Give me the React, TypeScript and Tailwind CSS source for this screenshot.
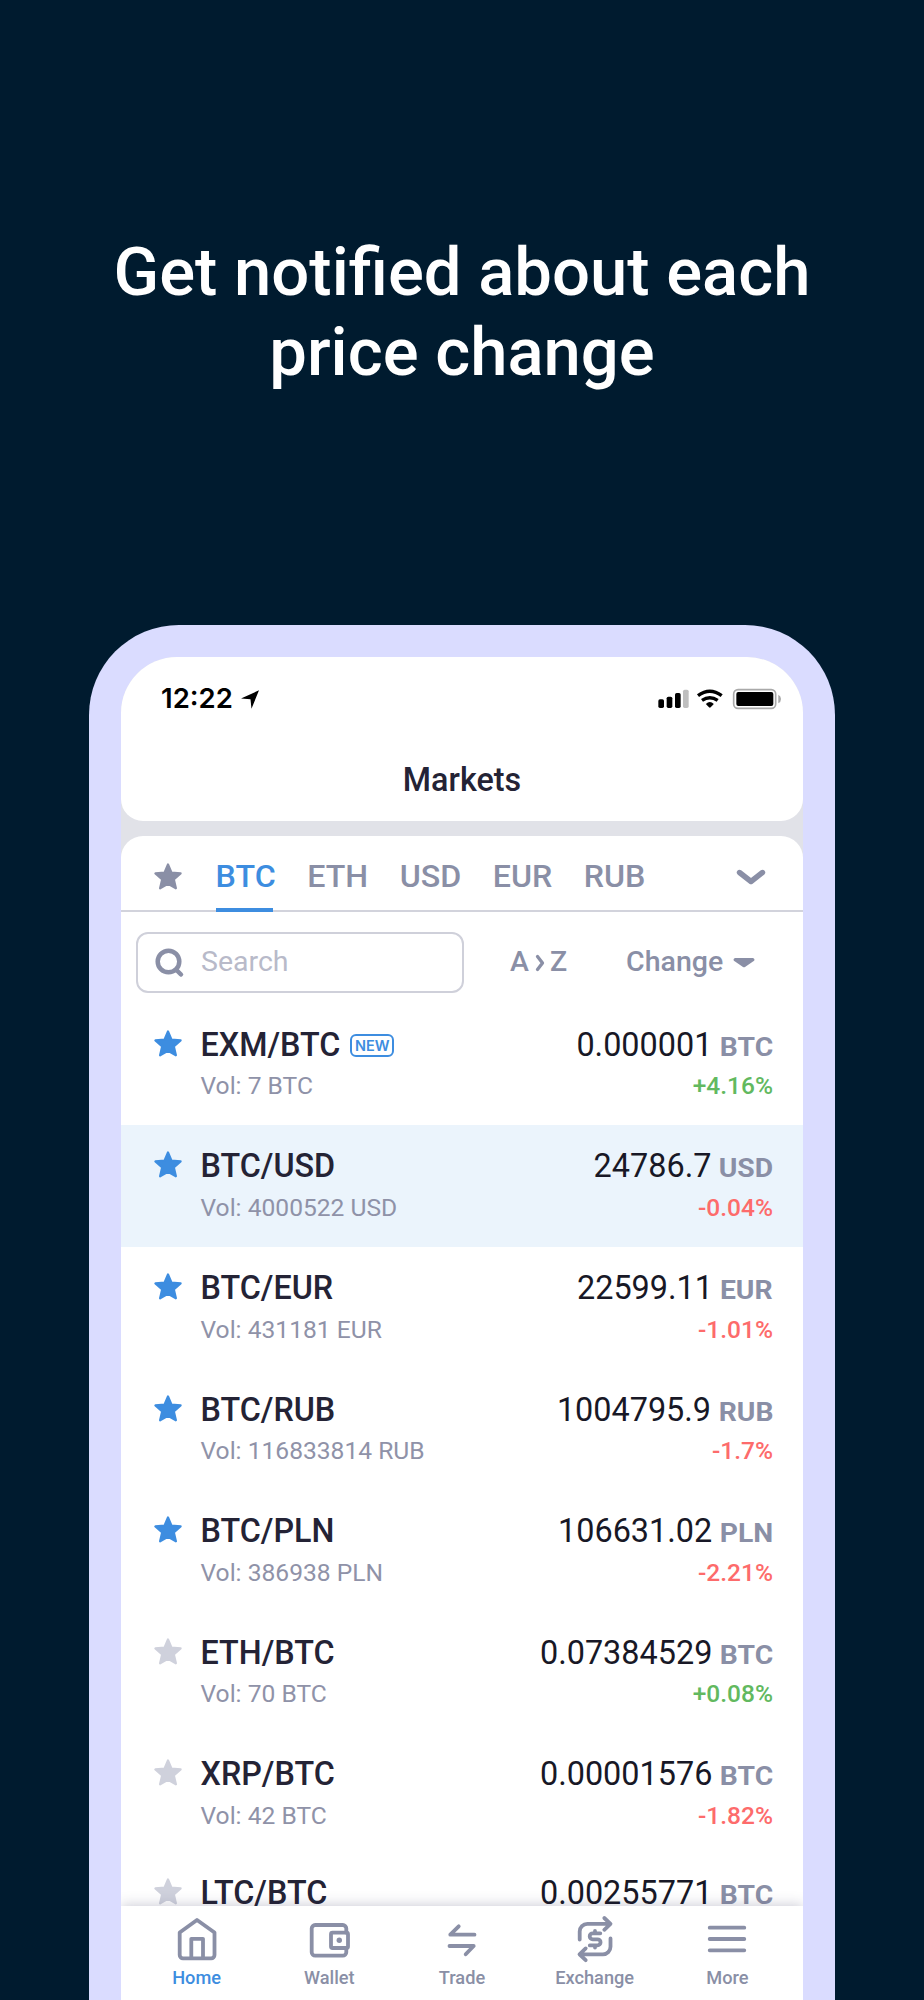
import clsx from 'clsx'

interface Market {
  name: string
  volume: string
  price: string
  unit: string
  change: string
  favorite?: boolean
  isNew?: boolean
  active?: boolean
}

const markets: Market[] = [
  { name: 'EXM/BTC', volume: '7 BTC', price: '0.000001', unit: 'BTC', change: '+4.16%', favorite: true, isNew: true },
  { name: 'BTC/USD', volume: '4000522 USD', price: '24786.7', unit: 'USD', change: '-0.04%', favorite: true, active: true },
  { name: 'BTC/EUR', volume: '431181 EUR', price: '22599.11', unit: 'EUR', change: '-1.01%', favorite: true },
  { name: 'BTC/RUB', volume: '116833814 RUB', price: '1004795.9', unit: 'RUB', change: '-1.7%', favorite: true },
  { name: 'BTC/PLN', volume: '386938 PLN', price: '106631.02', unit: 'PLN', change: '-2.21%', favorite: true },
  { name: 'ETH/BTC', volume: '70 BTC', price: '0.07384529', unit: 'BTC', change: '+0.08%' },
  { name: 'XRP/BTC', volume: '42 BTC', price: '0.00001576', unit: 'BTC', change: '-1.82%' },
]

function Star({ className }: { className?: string }) {
  return (
    <svg viewBox="0 0 30 30" className={clsx('h-[30px] w-[30px] shrink-0', className)}>
      <path
        d="M15 2.4 18.4 10.5 27.6 11.4 20.8 17.3 22.9 26.3 15 21.8 7.1 26.3 9.2 17.3 2.4 11.4 11.6 10.5Z"
        fill="currentColor" stroke="currentColor" strokeWidth="2.2" strokeLinejoin="round"
      />
    </svg>
  )
}

function StatusIcons() {
  return (
    <div className="flex items-center">
      <svg viewBox="0 0 99 66" className="h-[22px] w-[33px]">
        <g fill="#000">
          <rect x="4" y="34" width="17" height="26" rx="5" />
          <rect x="29" y="26" width="17" height="34" rx="5" />
          <rect x="54" y="15" width="17" height="45" rx="5" />
        </g>
        <rect x="78" y="5" width="17" height="55" rx="5" fill="#bfbfbf" />
      </svg>
      <svg viewBox="0 0 99 66" className="ml-[3px] h-[22px] w-[33px]">
        <g fill="none" stroke="#000" strokeWidth="10.5">
          <path d="M15 23Q50.5 -3 86 23" />
          <path d="M27 37Q50.5 21 74 37" />
        </g>
        <path d="M38.5 48Q50.5 36 62.5 48L53 58Q50.5 60 48 58Z" />
      </svg>
      <svg viewBox="0 0 153 66" className="ml-[5px] h-[22px] w-[51px]">
        <rect x="8" y="5" width="126" height="56" rx="13" fill="none" stroke="#a9a9a9" strokeWidth="5" />
        <rect x="16" y="12" width="111" height="42" rx="6" />
        <path d="M142 20Q150 24 150 33T142 46Z" fill="#a9a9a9" />
      </svg>
    </div>
  )
}

function NavIcon({ name }: { name: string }) {
  return (
    <svg viewBox="0 0 48 48" className="h-12 w-12 text-[#8a8fa6]" fill="none" stroke="currentColor" strokeWidth="3.8" strokeLinecap="round" strokeLinejoin="round">
      {name === 'Home' && (
        <>
          <path d="M24 5 41.5 17.5V40a3.3 3.3 0 0 1-3.3 3.3H10a3.3 3.3 0 0 1-3.3-3.3V17.5Z" />
          <path d="M18.3 43V23.8H30V43" />
        </>
      )}
      {name === 'Wallet' && (
        <>
          <path d="M41.3 17.7V13.5a3.5 3.5 0 0 0-3.5-3.5H10.2a3.5 3.5 0 0 0-3.5 3.5V37.2a3.5 3.5 0 0 0 3.5 3.5H37.8a3.5 3.5 0 0 0 3.5-3.5V33" />
          <rect x="26" y="17.7" width="17" height="15.3" rx="1.5" />
          <circle cx="34.3" cy="25.3" r="2.7" fill="currentColor" stroke="none" />
        </>
      )}
      {name === 'Trade' && (
        <>
          <path d="M36.5 19.7H12.3L20.7 11.3" />
          <path d="M11.5 31H35.7L27.7 39.3" />
        </>
      )}
      {name === 'Exchange' && (
        <>
          <path d="M8.7 24.5V16.5A7.6 7.6 0 0 1 16.3 8.9H39M33.3 3 39.5 8.9 33.3 14.8" />
          <path d="M39.5 23.5V31.7A7.6 7.6 0 0 1 31.9 39.3H9M14.7 33.4 8.5 39.3 14.7 45.2" />
          <path d="M29.3 18.3H21.7a3 3 0 0 0 0 6H26.5a3 3 0 0 1 0 6.1H18.8M24 16V18M24 30.5V32.5" />
        </>
      )}
      {name === 'More' && <path d="M6.7 12.7H41.3M6.7 24H41.3M6.7 35.3H41.3" />}
    </svg>
  )
}

function MarketRow({ market }: { market: Market }) {
  return (
    <div className={clsx('flex h-[121.6px] justify-between pt-[21.5px] pr-[30px] pl-8', market.active && 'bg-[#ebf4fc]')}>
      <div className="flex">
        <Star className={clsx('mt-1', market.favorite ? 'text-[#3d8de0]' : 'text-[#cfd1dc]')} />
        <div className="ml-[17.5px]">
          <div className="flex h-10 items-center">
            <span className="text-[32.3px] leading-10 font-medium text-[#242335]">{market.name}</span>
            {market.isNew && (
              <span className="mt-px ml-2.5 flex h-[23px] w-11 items-center justify-center rounded-md border-2 border-[#3d8de0] font-['Inter',sans-serif] text-[14.5px] font-semibold text-[#3d8de0]">
                NEW
              </span>
            )}
          </div>
          <div className="mt-[5.6px] text-[24.6px] leading-8 text-[#8f92a8]">Vol: {market.volume}</div>
        </div>
      </div>
      <div className="flex flex-col items-end">
        <div className="flex h-10 items-baseline leading-10 text-[#181826]">
          <span className="text-[32.4px]">{market.price}</span>
          <span className="ml-[13.5px] origin-right scale-x-[1.13] text-[25px] font-bold text-[#8a8fa6]">{market.unit}</span>
        </div>
        <div className={clsx('mt-[5.6px] text-[24.5px] leading-8 font-medium', market.change.startsWith('+') ? 'text-[#62b95f]' : 'text-[#fd6b6b]')}>
          {market.change}
        </div>
      </div>
    </div>
  )
}

export default function App() {
  return (
    <div className="flex h-[2000px] w-[924px] flex-col items-center overflow-hidden bg-[#001b2f] pt-[232px] font-['Roboto',sans-serif]">
      <h1 className="h-40 text-center text-[67px] leading-[80px] font-medium whitespace-nowrap text-white">
        Get notified about each
        <br />
        price change
      </h1>

      <div className="mt-[233px] h-[1375px] w-[746px] shrink-0 rounded-t-[90px] bg-[#dadcff] px-8 pt-8">
        <div className="flex h-[1343px] flex-col overflow-hidden rounded-t-[56px] bg-[#e1e2e8]">
          <header className="h-[164px] shrink-0 rounded-b-[22px] bg-white">
            <div className="flex h-[84px] items-center justify-between pr-[21px] pl-10">
              <div className="flex items-center">
                <span className="font-['Inter',sans-serif] text-[27.5px] font-semibold text-black">12:22</span>
                <svg viewBox="0 0 55 56" className="ml-2 h-[19px] w-[18px]">
                  <path d="M55 0 32 56 29 27 0 25Z" />
                </svg>
              </div>
              <StatusIcons />
            </div>
            <div className="pt-[19px] text-center text-[32.3px] leading-10 font-medium text-[#242335]">Markets</div>
          </header>

          <main className="mt-[15px] flex min-h-0 flex-1 flex-col rounded-t-[22px] bg-white">
            <div className="flex h-[76px] shrink-0 items-center border-b-2 border-[#d2d3dc] pl-8 text-[32.2px] leading-10 font-medium text-[#8a8fa6]">
              <Star className="mt-2" />
              <div className="ml-[32.6px] flex h-[76px] gap-[31.5px] pt-[21px]">
                <div className="flex h-14 flex-col justify-between text-[#3d8de0]">
                  <span>BTC</span>
                  <span className="h-1 w-[57px] bg-[#3d8de0]" />
                </div>
                <span>ETH</span>
                <span>USD</span>
                <span>EUR</span>
                <span>RUB</span>
              </div>
              <svg viewBox="0 0 30 17" className="mt-2 mr-[37px] ml-auto h-[17px] w-[30px]" fill="none" stroke="currentColor" strokeWidth="5.4" strokeLinecap="round" strokeLinejoin="round">
                <path d="M3.5 3.5 15 12.5 26.5 3.5" />
              </svg>
            </div>

            <div className="flex h-[91px] shrink-0 items-start pt-5 pl-[15px] text-[28.5px] font-medium text-[#8a8fa6]">
              <div className="flex h-[61px] w-[328px] items-center rounded-xl border-2 border-[#cfd0da] pl-4">
                <svg viewBox="0 0 30 30" className="mt-px ml-px h-[30px] w-[30px]" fill="none" stroke="currentColor" strokeWidth="4.5" strokeLinecap="round">
                  <circle cx="13.5" cy="13.5" r="10.8" />
                  <path d="M21.5 22 26 26.5" />
                </svg>
                <span className="ml-4 font-normal text-[#b8bac9]">Search</span>
              </div>
              <div className="ml-[46px] flex h-[61px] items-center">
                A
                <svg viewBox="0 0 10 18" className="mr-[5px] ml-1.5 h-[18px] w-2.5" fill="none" stroke="currentColor" strokeWidth="3.3" strokeLinecap="round" strokeLinejoin="round">
                  <path d="M2.5 2.5 7.5 9 2.5 15.5" />
                </svg>
                Z
              </div>
              <div className="ml-[59px] flex h-[61px] items-center">
                Change
                <svg viewBox="0 0 22 10" className="ml-2.5 h-2.5 w-[22px]" fill="currentColor">
                  <path d="M2 0H20Q23 1.5 20 3.5L12 9Q11 9.7 10 9L2 3.5Q-1 1.5 2 0Z" />
                </svg>
              </div>
            </div>

            <div className="min-h-0 flex-1 overflow-hidden pt-[0.4px]">
              {markets.map((market) => (
                <MarketRow key={market.name} market={market} />
              ))}
              <div className="-mt-[3.5px]">
                <MarketRow market={{ name: 'LTC/BTC', volume: '12 BTC', price: '0.00255771', unit: 'BTC', change: '-0.5%' }} />
              </div>
            </div>
          </main>

          <nav className="z-10 flex h-[94px] shrink-0 justify-center bg-white pt-[9px] shadow-[0_-1px_12px_rgba(50,50,90,0.25)]">
            {['Home', 'Wallet', 'Trade', 'Exchange', 'More'].map((item) => (
              <div key={item} className="flex w-[132.7px] flex-col items-center">
                <NavIcon name={item} />
                <span className={clsx('mt-[3px] text-[18.2px] leading-6 font-medium', item === 'Home' ? 'text-[#3d8de0]' : 'text-[#8a8fa6]')}>{item}</span>
              </div>
            ))}
          </nav>
        </div>
      </div>
    </div>
  )
}
